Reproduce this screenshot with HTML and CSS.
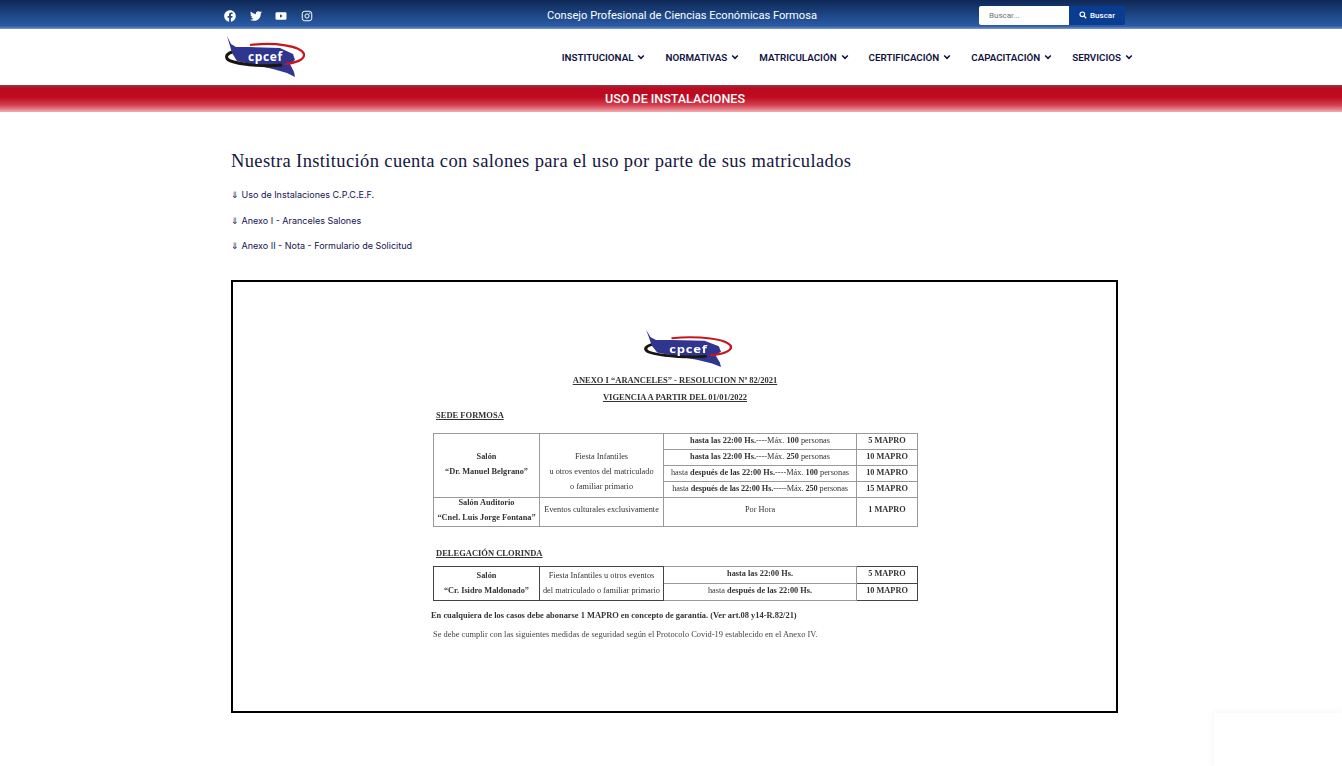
FILE: index.html
```html
<!DOCTYPE html>
<html lang="es">
<head>
<meta charset="utf-8">
<title>Uso de Instalaciones</title>
<link rel="stylesheet" href="styles.css">
</head>
<body>
<svg class="defs" width="0" height="0" aria-hidden="true">
  <symbol id="chev" viewBox="0 0 10 10"><path d="M1.500 3.200 5 6.700l3.500-3.500" fill="none" stroke="currentColor" stroke-width="1.900"/></symbol>
</svg>
<header class="topbar">
  <div class="social">
    <a class="soc"><svg viewBox="0 0 512 512"><path fill="currentColor" d="M504 256C504 119 393 8 256 8S8 119 8 256c0 123.800 90.700 226.400 209.300 245V327.700h-63V256h63v-54.600c0-62.200 37-96.500 93.700-96.500 27.100 0 55.500 4.800 55.500 4.800v61h-31.300c-30.800 0-40.400 19.100-40.400 38.700V256h68.800l-11 71.700h-57.800V501C413.300 482.400 504 379.800 504 256z"/></svg></a>
    <a class="soc"><svg viewBox="0 0 512 512"><path fill="currentColor" d="M459.370 151.716c.325 4.548.325 9.097.325 13.645 0 138.720-105.583 298.558-298.558 298.558-59.452 0-114.680-17.219-161.137-47.106 8.447.974 16.568 1.299 25.340 1.299 49.055 0 94.213-16.568 130.274-44.832-46.132-.975-84.792-31.188-98.112-72.772 6.498.974 12.995 1.624 19.818 1.624 9.421 0 18.843-1.300 27.614-3.573-48.081-9.747-84.143-51.980-84.143-102.985v-1.299c13.969 7.797 30.214 12.670 47.431 13.319-28.264-18.843-46.781-51.005-46.781-87.391 0-19.492 5.197-37.360 14.294-52.954 51.655 63.675 129.300 105.258 216.365 109.807-1.624-7.797-2.599-15.918-2.599-24.040 0-57.828 46.782-104.934 104.934-104.934 30.213 0 57.502 12.670 76.670 33.137 23.715-4.548 46.456-13.320 66.599-25.340-7.798 24.366-24.366 44.833-46.132 57.827 21.117-2.273 41.584-8.122 60.426-16.243-14.292 20.791-32.161 39.308-52.628 54.253z"/></svg></a>
    <a class="soc"><svg viewBox="0 0 24 24"><path fill="currentColor" fill-rule="evenodd" d="M3.500 4.500h17A2.500 2.500 0 0 1 23 7v10a2.500 2.500 0 0 1-2.500 2.500h-17A2.500 2.500 0 0 1 1 17V7a2.500 2.500 0 0 1 2.500-2.500zM10 8.700v6.600l5.500-3.300z"/></svg></a>
    <a class="soc"><svg viewBox="0 0 24 24"><rect x="2.500" y="2.500" width="19" height="19" rx="5" fill="none" stroke="currentColor" stroke-width="2"/><circle cx="12" cy="12" r="4.200" fill="none" stroke="currentColor" stroke-width="2"/><circle cx="17.500" cy="6.500" r="1.300" fill="currentColor"/></svg></a>
  </div>
  <div class="top-title">Consejo Profesional de Ciencias Económicas Formosa</div>
  <form class="search">
    <span class="search-input">Buscar...</span>
    <span class="search-btn"><svg viewBox="0 0 12 12"><circle cx="5" cy="5" r="3.500" fill="none" stroke="currentColor" stroke-width="1.700"/><path d="m7.600 7.600 3.200 3.200" stroke="currentColor" stroke-width="1.900"/></svg>Buscar</span>
  </form>
</header>

<nav class="mainnav">
  <svg class="logo" viewBox="0 0 80 42" preserveAspectRatio="none" aria-label="cpcef">
    <path d="M2 0 6 8 11 11 25 11 55 12 68 18 70 24 65 28 69 36 70 41 62 37 48 33 30 29 12 25 7 17 5 10z" fill="#30358f"/>
    <path d="M7 16C-1 19 0 24 9 26 20 29 40 31 57 29" fill="none" stroke="#1b1512" stroke-width="3"/>
    <path d="M25 9C50 6 76 10 79 18 80 24 70 27 60 28" fill="none" stroke="#c8161f" stroke-width="2.200"/>
    <text x="23" y="25" class="logo-text">cpcef</text>
  </svg>
  <ul class="menu">
    <li>INSTITUCIONAL<svg class="chev"><use href="#chev"/></svg></li>
    <li>NORMATIVAS<svg class="chev"><use href="#chev"/></svg></li>
    <li>MATRICULACIÓN<svg class="chev"><use href="#chev"/></svg></li>
    <li>CERTIFICACIÓN<svg class="chev"><use href="#chev"/></svg></li>
    <li>CAPACITACIÓN<svg class="chev"><use href="#chev"/></svg></li>
    <li>SERVICIOS<svg class="chev"><use href="#chev"/></svg></li>
  </ul>
</nav>

<div class="band">USO DE INSTALACIONES</div>

<main class="content">
  <h1>Nuestra Institución cuenta con salones para el uso por parte de sus matriculados</h1>
  <p class="dl">⇓ Uso de Instalaciones C.P.C.E.F.</p>
  <p class="dl">⇓ Anexo I - Aranceles Salones</p>
  <p class="dl">⇓ Anexo II - Nota - Formulario de Solicitud</p>

  <section class="doc">
    <svg class="logo doc-logo" viewBox="0 0 80 42" preserveAspectRatio="none" aria-label="cpcef">
      <path d="M2 0 6 8 11 11 25 11 55 12 68 18 70 24 65 28 69 36 70 41 62 37 48 33 30 29 12 25 7 17 5 10z" fill="#30358f"/>
      <path d="M7 16C-1 19 0 24 9 26 20 29 40 31 57 29" fill="none" stroke="#1b1512" stroke-width="3"/>
      <path d="M25 9C50 6 76 10 79 18 80 24 70 27 60 28" fill="none" stroke="#c8161f" stroke-width="2.200"/>
      <text x="23" y="25" class="logo-text">cpcef</text>
    </svg>
    <p class="doc-title first"><u>ANEXO I “ARANCELES” -  RESOLUCION Nº 82/2021</u></p>
    <p class="doc-title second"><u>VIGENCIA A PARTIR DEL  01/01/2022</u></p>
    <p class="doc-sub sede"><u>SEDE FORMOSA</u></p>

    <table class="tarifas t1">
      <colgroup><col class="c1"><col class="c2"><col class="c3"><col class="c4"></colgroup>
      <tr class="r16">
        <td rowspan="4" class="b"><div class="tall salon">Salón<br>“Dr. Manuel Belgrano”</div></td>
        <td rowspan="4"><div class="tall fiesta">Fiesta Infantiles<br>u otros eventos del matriculado<br>o familiar primario</div></td>
        <td><b>hasta las 22:00 Hs.</b>----Máx. <b>100</b> personas</td>
        <td class="b">5 MAPRO</td>
      </tr>
      <tr class="r16"><td><b>hasta las 22:00 Hs.</b>----Máx. <b>250</b> personas</td><td class="b">10 MAPRO</td></tr>
      <tr class="r16"><td>hasta <b>después de las 22:00 Hs.</b>----Máx. <b>100</b> personas</td><td class="b">10 MAPRO</td></tr>
      <tr class="r16"><td class="tight">hasta <b>después de las 22:00 Hs.</b>-----Máx. <b>250</b> personas</td><td class="b">15 MAPRO</td></tr>
      <tr class="r31">
        <td class="b top"><div class="mid">Salón Auditorio<br>“Cnel. Luis Jorge Fontana”</div></td>
        <td class="top"><div class="pad">Eventos culturales exclusivamente</div></td>
        <td class="top"><div class="pad">Por Hora</div></td>
        <td class="b top"><div class="pad">1 MAPRO</div></td>
      </tr>
    </table>

    <p class="doc-sub dele"><u>DELEGACIÓN CLORINDA</u></p>

    <table class="tarifas t2">
      <colgroup><col class="c1"><col class="c2"><col class="c3"><col class="c4"></colgroup>
      <tr class="r17">
        <td rowspan="2" class="b dark"><div class="mid2">Salón<br>“Cr. Isidro Maldonado”</div></td>
        <td rowspan="2" class="dark"><div class="mid2">Fiesta Infantiles u otros eventos<br>del matriculado o familiar primario</div></td>
        <td class="b">hasta las 22:00 Hs.</td>
        <td class="b dark">5 MAPRO</td>
      </tr>
      <tr class="r17"><td>hasta <b>después de las 22:00 Hs.</b></td><td class="b dark">10 MAPRO</td></tr>
    </table>

    <p class="note">En cualquiera de los casos debe abonarse 1 MAPRO en concepto de garantía. (Ver art.08 y14-R.82/21)</p>
    <p class="note2">Se debe cumplir con las siguientes medidas de seguridad según el Protocolo Covid-19 establecido en el Anexo IV.</p>
  </section>
</main>
<div class="ghost" aria-hidden="true"></div>
</body>
</html>
```
FILE: styles.css
```css
* { box-sizing: border-box; }
html, body { margin: 0; padding: 0; height: 766px; overflow: hidden; background: #fff; }
body { font-family: Roboto, "Liberation Sans", sans-serif; }
.defs { position: absolute; }

.topbar {
  height: 29px;
  padding: 2px 217px 0 224px;
  display: flex;
  align-items: center;
  color: #fff;
  background: linear-gradient(to bottom, #0e2856 0%, #1b427f 45%, #2a5ba6 90%, #7f9bc6 100%);
}
.social { display: flex; width: 323px; gap: 13.500px; }
.soc { width: 12px; height: 12px; display: block; }
.soc svg { width: 12px; height: 12px; display: block; }
.top-title { width: 270px; font-size: 11.130px; white-space: nowrap; margin-right: 162px; }
.search { display: flex; height: 19px; margin-top: -1px; }
.search-input {
  width: 90px; background: #fff; color: #6b7280; font-size: 8px;
  padding-left: 10px; display: flex; align-items: center; border-radius: 2px 0 0 2px;
}
.search-btn {
  width: 56px; background: #0a3c92; color: #fff; font-size: 8px; font-weight: 500;
  display: flex; align-items: center; justify-content: center; gap: 3px; border-radius: 0 2px 2px 0;
}
.search-btn svg { width: 8px; height: 8px; }

.mainnav {
  height: 56px;
  padding: 0 209px 0 225px;
  display: flex;
  align-items: center;
  justify-content: space-between;
}
.logo { width: 80px; height: 42px; display: block; }
.mainnav .logo { margin-top: -1px; }
.logo-text { font: 700 12px "Open Sans", "Liberation Sans", sans-serif; letter-spacing: .6px; fill: #fff; }
.menu { list-style: none; margin: 0; padding: 0; display: flex; gap: 20px; }
.menu li {
  display: flex; align-items: center; gap: 4px;
  font-size: 9.800px; font-weight: 600; color: #10123f; white-space: nowrap;
}
.chev { width: 8px; height: 8px; color: #10123f; }

.band {
  height: 27px;
  display: flex; align-items: center; justify-content: center;
  padding-left: 8px;
  color: #fff; font-size: 12.500px; font-weight: 500;
  background: linear-gradient(to bottom, #8e3a48 0%, #bb0a20 12%, #bd0b22 45%, #d4404f 75%, #f2aab2 100%);
}

.content { padding: 37px 224px 0 231px; }
h1 {
  margin: 0 0 15px;
  font: 400 18.500px/24px "Liberation Serif", serif;
  letter-spacing: .37px;
  color: #15163f;
  white-space: nowrap;
}
.dl {
  margin: 0 0 11.500px;
  font: 400 9px/14px Inter, Roboto, sans-serif;
  color: #15124f;
}

.doc {
  margin-top: 27px;
  width: 887px;
  height: 433px;
  border: 2px solid #000;
  padding: 48px 200px 0;
  font-family: "Liberation Serif", serif;
  color: #333;
}
.doc p, .tarifas, .doc-logo { filter: blur(.3px); }
.doc-logo { width: 88px; height: 38px; margin: 0 0 0 211px; }
.doc p { margin: 0; }
.doc-title { font-size: 8.500px; font-weight: 700; text-align: center; line-height: 12px; width: 484px; }
.first { margin-top: 6px !important; }
.second { margin-top: 5px !important; }
.doc-sub { font-size: 8.500px; font-weight: 700; line-height: 12px; padding-left: 3px; }
.sede { margin-top: 6px !important; }
.dele { margin-top: 20px !important; }

.tarifas {
  width: 484px;
  table-layout: fixed;
  border-collapse: collapse;
  font-size: 8.300px;
  line-height: 12px;
  text-align: center;
}
.t1 { margin-top: 12px; }
.t2 { margin-top: 7px; }
.c1 { width: 106px; }
.c2 { width: 124px; }
.c3 { width: 193px; }
.c4 { width: 61px; }
.tarifas td { border: 1px solid #999; padding: 0; vertical-align: middle; white-space: nowrap; overflow: hidden; }
.tarifas td.b { font-weight: 700; }
.tarifas td.dark { border-color: #444; }
.tarifas td.top { vertical-align: top; }
.r16 td { height: 16px; padding-bottom: 2px; }
.r31 td { height: 29px; }
.r17 td { height: 17px; padding-bottom: 2px; }
.tall { line-height: 15px; }
.salon { padding-bottom: 2px; }
.fiesta { padding-top: 13px; }
.mid { line-height: 15px; margin-top: -3px; }
.mid2 { line-height: 15px; }
.pad { padding-top: 6px; }
.tight { letter-spacing: -.1px; }
.note { font-size: 8.420px; font-weight: 700; line-height: 12px; margin-top: 8px !important; margin-left: -2px !important; white-space: nowrap; }
.note2 { font-size: 8.430px; line-height: 12px; margin-top: 7px !important; color: #444; white-space: nowrap; }

.ghost {
  position: absolute; left: 1214px; top: 713px; width: 128px; height: 53px;
  box-shadow: 0 0 8px rgba(0,0,0,.05);
}
```
